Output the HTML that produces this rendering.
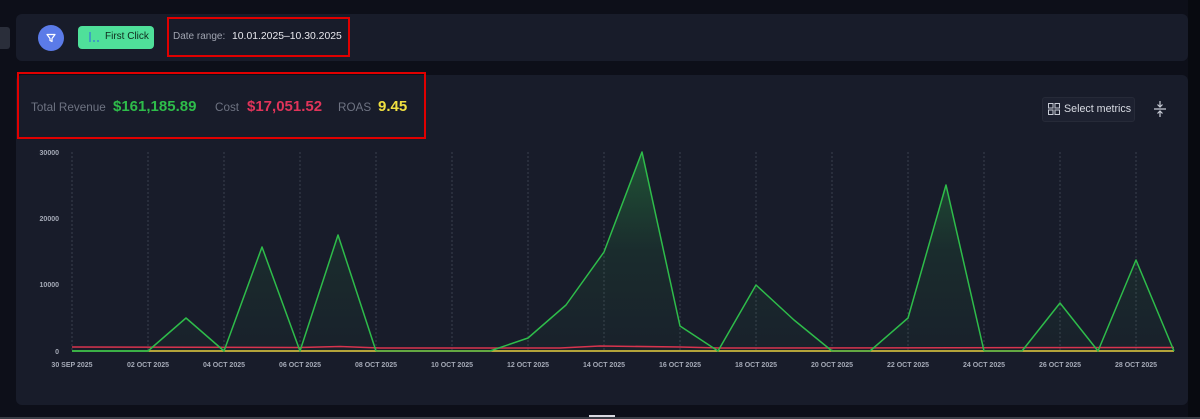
<!DOCTYPE html>
<html><head><meta charset="utf-8"><style>
body{margin:0;width:1200px;height:419px;background:#0d0f19;font-family:"Liberation Sans",sans-serif;overflow:hidden;position:relative}
.card{position:absolute;background:#181c2a;border-radius:6px}
.rb{position:absolute;border:2px solid #e00000}
</style></head><body>
<div style="position:absolute;left:0;top:27px;width:10px;height:22px;background:#2a2e3a;border-radius:0 3px 3px 0"></div>
<div class="card" style="left:16px;top:14px;width:1172px;height:47px"></div>
<div style="position:absolute;left:38px;top:25px;width:26px;height:26px;border-radius:50%;background:#5b7be8"></div>
<svg style="position:absolute;left:45px;top:32px" width="12" height="12" viewBox="0 0 12 12"><path d="M2 2.5h8L7 6.5v3l-2-1V6.5z" fill="none" stroke="#fff" stroke-width="1.2" stroke-linejoin="round"/></svg>
<div style="position:absolute;left:78px;top:26px;width:76px;height:23px;background:#4fe09a;border-radius:4px"></div>
<div style="position:absolute;left:89px;top:32px;width:1.5px;height:10px;background:#3fa0c0"></div>
<div style="position:absolute;left:93px;top:40px;width:2px;height:2px;background:#3fa0c0"></div>
<div style="position:absolute;left:97px;top:40px;width:2px;height:2px;background:#3fa0c0"></div>
<div style="position:absolute;left:105px;top:31px;font-size:10px;color:#102a1c">First Click</div>
<div class="rb" style="left:167px;top:17px;width:179px;height:36px"></div>
<div style="position:absolute;left:173px;top:31px;font-size:10px;color:#a0a4b0">Date range:</div>
<div style="position:absolute;left:232px;top:31px;font-size:10.4px;color:#e8e8ee">10.01.2025–10.30.2025</div>

<div class="card" style="left:16px;top:75px;width:1172px;height:330px"></div>
<div class="rb" style="left:17px;top:72px;width:405px;height:63px"></div>
<div style="position:absolute;left:31px;top:101px;font-size:11.7px;color:#6e7382">Total Revenue</div>
<div style="position:absolute;left:113px;top:98px;font-size:15px;font-weight:bold;color:#2ebc4a">$161,185.89</div>
<div style="position:absolute;left:215px;top:101px;font-size:11.7px;color:#6e7382">Cost</div>
<div style="position:absolute;left:247px;top:98px;font-size:15px;font-weight:bold;color:#e0345a">$17,051.52</div>
<div style="position:absolute;left:338px;top:101px;font-size:11.7px;color:#6e7382">ROAS</div>
<div style="position:absolute;left:378px;top:98px;font-size:15px;font-weight:bold;color:#f0e040">9.45</div>

<div style="position:absolute;left:1042px;top:97px;width:91px;height:23px;background:#1d2130;border:1px solid #262a38;border-radius:3px"></div>
<svg style="position:absolute;left:1048px;top:103px" width="12" height="12" viewBox="0 0 12 12" fill="none" stroke="#c8ccd6" stroke-width="1"><rect x="0.5" y="0.5" width="4.5" height="4.5"/><rect x="7" y="0.5" width="4.5" height="4.5"/><rect x="0.5" y="7" width="4.5" height="4.5"/><rect x="7" y="7" width="4.5" height="4.5"/></svg>
<div style="position:absolute;left:1064px;top:103px;font-size:10.7px;color:#d8dbe3">Select metrics</div>
<svg style="position:absolute;left:1153px;top:100px" width="14" height="18" viewBox="0 0 14 18" fill="none" stroke="#c8ccd6" stroke-width="1.2"><path d="M1 9h12M7 1v6M4.5 4.5L7 7l2.5-2.5M7 17v-6M4.5 13.5L7 11l2.5 2.5"/></svg>

<svg style="position:absolute;left:0;top:0" width="1200" height="419">
<defs><linearGradient id="g" x1="0" y1="150" x2="0" y2="351" gradientUnits="userSpaceOnUse"><stop offset="0" stop-color="#2ebc4a" stop-opacity="0.35"/><stop offset="0.5" stop-color="#2ebc4a" stop-opacity="0.1"/><stop offset="1" stop-color="#2ebc4a" stop-opacity="0.03"/></linearGradient></defs>
<g stroke="#3a3f4e" stroke-width="1" stroke-dasharray="2,2">
<line x1="72" y1="152" x2="72" y2="351"/><line x1="148" y1="152" x2="148" y2="351"/><line x1="224" y1="152" x2="224" y2="351"/><line x1="300" y1="152" x2="300" y2="351"/><line x1="376" y1="152" x2="376" y2="351"/><line x1="452" y1="152" x2="452" y2="351"/><line x1="528" y1="152" x2="528" y2="351"/><line x1="604" y1="152" x2="604" y2="351"/><line x1="680" y1="152" x2="680" y2="351"/><line x1="756" y1="152" x2="756" y2="351"/><line x1="832" y1="152" x2="832" y2="351"/><line x1="908" y1="152" x2="908" y2="351"/><line x1="984" y1="152" x2="984" y2="351"/><line x1="1060" y1="152" x2="1060" y2="351"/><line x1="1136" y1="152" x2="1136" y2="351"/>
</g>
<g font-size="7" font-weight="bold" fill="#a4a9b6" font-family="Liberation Sans,sans-serif">
<text x="59" y="155" text-anchor="end">30000</text><text x="59" y="221" text-anchor="end">20000</text><text x="59" y="287" text-anchor="end">10000</text><text x="59" y="354" text-anchor="end">0</text>
<g text-anchor="middle"><text x="72" y="367">30 SEP 2025</text><text x="148" y="367">02 OCT 2025</text><text x="224" y="367">04 OCT 2025</text><text x="300" y="367">06 OCT 2025</text><text x="376" y="367">08 OCT 2025</text><text x="452" y="367">10 OCT 2025</text><text x="528" y="367">12 OCT 2025</text><text x="604" y="367">14 OCT 2025</text><text x="680" y="367">16 OCT 2025</text><text x="756" y="367">18 OCT 2025</text><text x="832" y="367">20 OCT 2025</text><text x="908" y="367">22 OCT 2025</text><text x="984" y="367">24 OCT 2025</text><text x="1060" y="367">26 OCT 2025</text><text x="1136" y="367">28 OCT 2025</text></g>
</g>
<path d="M72 351L148 351L186 318L224 351L262 247L300 351L338 235L376 351L490 351L528 338L566 305L604 252L642 152L680 326L718 351L756 285L794 320L832 351L870 351L908 318L946 185L984 351L1022 351L1060 303L1098 351L1136 260L1174 351Z" fill="url(#g)"/>
<path d="M72 347L300 347.5L340 346.5L380 348L560 348L600 346L680 347L720 348L1174 347.5" fill="none" stroke="#d8344e" stroke-width="1.5"/>
<line x1="72" y1="351" x2="1174" y2="351" stroke="#e8d040" stroke-width="1.5"/>
<path d="M72 351L148 351L186 318L224 351L262 247L300 351L338 235L376 351M490 351L528 338L566 305L604 252L642 152L680 326L718 351L756 285L794 320L832 351M870 351L908 318L946 185L984 351M1022 351L1060 303L1098 351L1136 260L1174 351" fill="none" stroke="#2ebc4a" stroke-width="1.5" stroke-linejoin="round"/>
<path d="M72 351L148 351M376 351L490 351M832 351L870 351M984 351L1022 351" stroke="#2ebc4a" stroke-width="1.5" opacity="0.7"/>
</svg>
<div style="position:absolute;left:1188px;top:0;width:12px;height:419px;background:#080a10"></div>
<div style="position:absolute;left:589px;top:415px;width:26px;height:2px;background:#d8d8e0"></div>
<div style="position:absolute;left:0;top:417px;width:1200px;height:2px;background:#3a3d46"></div>
</body></html>
